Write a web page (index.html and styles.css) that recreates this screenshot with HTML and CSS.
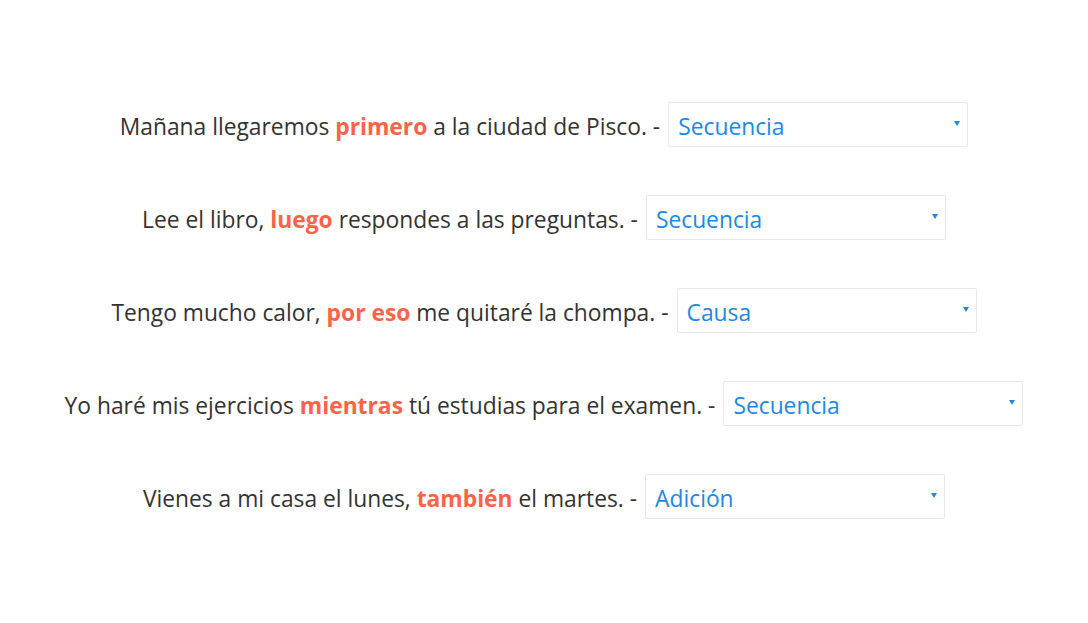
FILE: index.html
```html
<!DOCTYPE html>
<html lang="es">
<head>
<meta charset="utf-8">
<title>Conectores</title>
<link rel="stylesheet" href="styles.css">
</head>
<body>
<main class="list">
  <div class="row">
    <span class="sentence">Mañana llegaremos <b class="hl">primero</b> a la ciudad de Pisco. -</span>
    <div class="select-wrap">
      <select class="select"><option>Secuencia</option><option>Causa</option><option>Adición</option></select>
      <span class="arrow"></span>
    </div>
  </div>
  <div class="row">
    <span class="sentence">Lee el libro, <b class="hl">luego</b> respondes a las preguntas. -</span>
    <div class="select-wrap">
      <select class="select"><option>Secuencia</option><option>Causa</option><option>Adición</option></select>
      <span class="arrow"></span>
    </div>
  </div>
  <div class="row">
    <span class="sentence">Tengo mucho calor, <b class="hl">por eso</b> me quitaré la chompa. -</span>
    <div class="select-wrap">
      <select class="select"><option>Causa</option><option>Secuencia</option><option>Adición</option></select>
      <span class="arrow"></span>
    </div>
  </div>
  <div class="row">
    <span class="sentence">Yo haré mis ejercicios <b class="hl">mientras</b> tú estudias para el examen. -</span>
    <div class="select-wrap">
      <select class="select"><option>Secuencia</option><option>Causa</option><option>Adición</option></select>
      <span class="arrow"></span>
    </div>
  </div>
  <div class="row">
    <span class="sentence">Vienes a mi casa el lunes, <b class="hl">también</b> el martes. -</span>
    <div class="select-wrap">
      <select class="select"><option>Adición</option><option>Secuencia</option><option>Causa</option></select>
      <span class="arrow"></span>
    </div>
  </div>
</main>
</body>
</html>
```
FILE: styles.css
```css
html, body {
  margin: 0;
  padding: 0;
  background: #fff;
}
body {
  font-family: "Open Sans", "Noto Sans", sans-serif;
  color: #333;
}
.list {
  display: flex;
  flex-direction: column;
  align-items: center;
  gap: 48px;
  padding-top: 102px;
}
.row {
  display: flex;
  align-items: baseline;
  gap: 8px;
  height: 45px;
}
.sentence {
  font-size: 22.8px;
  line-height: 31px;
}
.hl {
  color: #ff6347;
  font-weight: 700;
}
.select-wrap {
  position: relative;
  display: inline-flex;
  width: 300px;
  height: 45px;
}
.select {
  appearance: none;
  -webkit-appearance: none;
  box-sizing: border-box;
  width: 100%;
  height: 45px;
  border: 1px solid #e8e8e8;
  border-radius: 2px;
  background: #fff;
  color: #1e88e5;
  font-family: inherit;
  font-size: 22.8px;
  padding: 4px 9px 0;
  outline: none;
}
.arrow {
  position: absolute;
  right: 8px;
  top: 19px;
  width: 0;
  height: 0;
  border-left: 3px solid transparent;
  border-right: 3px solid transparent;
  border-top: 5px solid #1e88e5;
}
```
